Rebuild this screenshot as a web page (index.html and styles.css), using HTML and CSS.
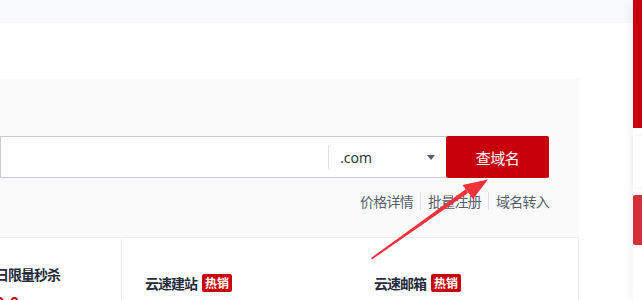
FILE: index.html
```html
<!DOCTYPE html>
<html lang="zh-CN">
<head>
<meta charset="utf-8">
<title>域名注册</title>
<link rel="stylesheet" href="styles.css">
</head>
<body>
<div class="topbar"></div>
<div class="page">
  <div class="content">
    <div class="search-panel">
      <div class="search-row">
        <div class="search-box">
          <div class="search-input"></div>
          <div class="suffix">
            <span class="suffix-text">.com</span>
            <span class="caret"></span>
          </div>
        </div>
        <button class="search-btn">查域名</button>
      </div>
      <div class="links">
        <a class="link">价格详情</a>
        <span class="sep"></span>
        <a class="link">批量注册</a>
        <span class="sep"></span>
        <a class="link">域名转入</a>
      </div>
    </div>
    <div class="cards">
      <div class="card card-first">
        <div class="card-title">日限量秒杀</div>
        <div class="card-price">0.0</div>
      </div>
      <div class="card card-mid">
        <div class="card-title">云速建站<span class="badge">热销</span></div>
      </div>
      <div class="card card-mid">
        <div class="card-title">云速邮箱<span class="badge">热销</span></div>
      </div>
    </div>
  </div>
</div>
<div class="sidebar">
  <div class="side-top"></div>
  <div class="side-white"></div>
  <div class="side-red"></div>
</div>
<svg class="arrow" width="642" height="300" viewBox="0 0 642 300">
  <polygon points="371,258 372,259.5 468,193 466,189" fill="#f2313b"/>
  <polygon points="488,179.5 462.5,185 473,199" fill="#f2313b"/>
</svg>
</body>
</html>
```
FILE: styles.css
```css
html, body {
  margin: 0;
  padding: 0;
  background: #fff;
  font-family: "Noto Sans CJK SC", "Noto Sans", sans-serif;
  overflow: hidden;
  width: 642px;
  height: 300px;
}
.topbar {
  height: 23px;
  background: #f7f9fc;
}
.page {
  display: flex;
}
.content {
  width: 579px;
  padding-top: 56px;
}
.search-panel {
  background: #fafafa;
  height: 158px;
  box-sizing: border-box;
  padding: 57px 30px 0 0;
}
.search-row {
  display: flex;
  justify-content: flex-end;
  height: 42px;
}
.search-box {
  width: 447px;
  box-sizing: border-box;
  border: 1px solid #c9cbd0;
  border-right: none;
  background: #fff;
  display: flex;
  align-items: center;
}
.search-input {
  flex: 1;
  height: 100%;
}
.suffix {
  width: 118px;
  height: 24px;
  border-left: 1px solid #dfe1e6;
  display: flex;
  align-items: center;
  justify-content: space-between;
  padding: 0 11px 0 11px;
  box-sizing: border-box;
}
.suffix-text {
  font-family: "Open Sans", "Noto Sans", sans-serif;
  font-size: 14px;
  color: #252b3a;
}
.caret {
  width: 0;
  height: 0;
  border-left: 4px solid transparent;
  border-right: 4px solid transparent;
  border-top: 5px solid #575d6c;
}
.search-btn {
  width: 103px;
  height: 42px;
  border: none;
  border-radius: 2px;
  background: #c7000b;
  color: #fff;
  font-family: "Noto Sans CJK SC", sans-serif;
  font-size: 15px;
  letter-spacing: -0.5px;
  padding: 0;
}
.links {
  display: flex;
  justify-content: flex-end;
  align-items: center;
  margin-top: 13px;
  height: 20px;
}
.link {
  font-size: 14px;
  letter-spacing: -0.75px;
  color: #575d6c;
  line-height: 20px;
}
.sep {
  width: 1px;
  height: 18px;
  background: #dfe1e6;
  margin: 0 7px 0 7px;
}
.cards {
  display: flex;
  border-top: 1px solid #eeeff1;
  border-right: 1px solid #eeeff1;
  height: 70px;
}
.card {
  box-sizing: border-box;
  flex-shrink: 0;
}
.card-first {
  width: 152px;
  border-right: 1px solid #eeeff1;
  padding-top: 25px;
  margin-left: -30px;
  padding-left: 25px;
}
.card-mid {
  width: 229px;
  padding: 34px 0 0 23px;
}
.card-title {
  font-size: 14px;
  letter-spacing: -1px;
  font-weight: 700;
  color: #252b3a;
  line-height: 22px;
  display: flex;
  align-items: center;
  white-space: nowrap;
}
.card-price {
  margin-top: 7px;
  font-size: 16px;
  font-weight: 700;
  color: #c7000b;
  line-height: 20px;
}
.badge {
  display: inline-block;
  margin-left: 5px;
  background: #c7000b;
  color: #fff;
  font-size: 12px;
  letter-spacing: 0;
  font-weight: 700;
  line-height: 18px;
  padding: 0 3px;
  border-radius: 2px;
}
.sidebar {
  position: fixed;
  top: 0;
  left: 633px;
  width: 40px;
  height: 300px;
  box-shadow: -4px 0 8px rgba(0,0,0,0.04);
}
.side-top {
  height: 128px;
  background: #c7000b;
}
.side-white {
  margin-top: 8px;
  height: 51px;
  background: #fff;
  box-shadow: 0 0 4px rgba(0,0,0,0.08);
}
.side-red {
  margin-top: 8px;
  height: 50px;
  background: #d52f3a;
  border-radius: 2px 0 0 2px;
}
.arrow {
  position: absolute;
  top: 0;
  left: 0;
  pointer-events: none;
}
```
